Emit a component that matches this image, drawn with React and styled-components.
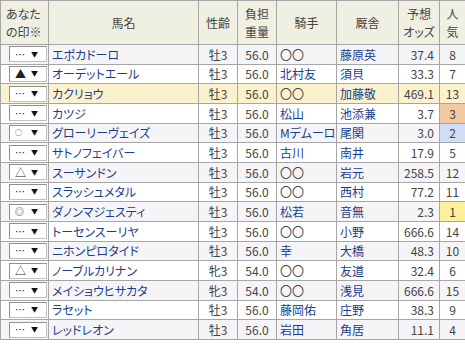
import React from "react";
import styled, { createGlobalStyle } from "styled-components";

const GlobalStyle = createGlobalStyle`
  body {
    margin: 0;
    background: #fff;
    font-family: "Noto Sans CJK JP", "Liberation Sans", sans-serif;
  }
`;

const line = "#a6a6a6";
const link = "#1b3d8f";

const Table = styled.table`
  width: 465px;
  table-layout: fixed;
  border-collapse: collapse;
  font-size: 12px;
  color: #444;
  font-feature-settings: "palt";
`;

const HeadRow = styled.tr`
  height: 44px;
  background: #efefe2;
`;

const HeadCell = styled.th`
  border: 1px solid ${line};
  font-weight: normal;
  font-size: 12px;
  line-height: 18px;
  color: #444;
  padding: 0 2px;
  text-align: ${(p) => p.$align || "center"};
  padding-left: ${(p) => (p.$align === "left" ? "5px" : "2px")};
`;

const Row = styled.tr`
  height: 19.66px;
  background: ${(p) => p.$bg};
`;

const Cell = styled.td`
  border: 1px solid ${line};
  padding: 0 ${(p) => p.$pad || 3}px;
  text-align: ${(p) => p.$align || "left"};
  color: ${(p) => p.$color || "#444"};
  background: ${(p) => p.$bg || "transparent"};
  white-space: nowrap;
  overflow: hidden;
  text-overflow: clip;
  line-height: 17px;
`;

const MarkBox = styled.div`
  width: 38px;
  height: 16px;
  margin-left: 5px;
  box-sizing: border-box;
  border: 1px solid #c0c0c0;
  border-top-color: #909090;
  border-left-color: #909090;
  background: #fff;
  display: flex;
  align-items: center;
  justify-content: space-between;
  padding: 0 8px 0 5px;
  font-size: 10px;
  color: #222;
`;

const Symbol = styled.span`
  font-size: ${(p) => p.$size};
`;

const Arrow = styled.span`
  font-size: 7px;
  color: #111;
`;

const horses = [
  ["…", "エポカドーロ", "牡3", "56.0", "〇〇", "藤原英", "37.4", 8],
  ["▲", "オーデットエール", "牡3", "56.0", "北村友", "須貝", "33.3", 7],
  ["…", "カクリョウ", "牡3", "56.0", "〇〇", "加藤敬", "469.1", 13],
  ["…", "カツジ", "牡3", "56.0", "松山", "池添兼", "3.7", 3],
  ["○", "グローリーヴェイズ", "牡3", "56.0", "Mデムーロ", "尾関", "3.0", 2],
  ["…", "サトノフェイバー", "牡3", "56.0", "古川", "南井", "17.9", 5],
  ["△", "スーサンドン", "牡3", "56.0", "〇〇", "岩元", "258.5", 12],
  ["…", "スラッシュメタル", "牡3", "56.0", "〇〇", "西村", "77.2", 11],
  ["◎", "ダノンマジェスティ", "牡3", "56.0", "松若", "音無", "2.3", 1],
  ["…", "トーセンスーリヤ", "牡3", "56.0", "〇〇", "小野", "666.6", 14],
  ["…", "ニホンピロタイド", "牡3", "56.0", "幸", "大橋", "48.3", 10],
  ["△", "ノーブルカリナン", "牝3", "54.0", "〇〇", "友道", "32.4", 6],
  ["…", "メイショウヒサカタ", "牝3", "54.0", "〇〇", "浅見", "666.6", 15],
  ["…", "ラセット", "牡3", "56.0", "藤岡佑", "庄野", "38.3", 9],
  ["…", "レッドレオン", "牡3", "56.0", "岩田", "角居", "11.1", 4],
];

const popColor = { 1: "#fff19c", 2: "#cfddf5", 3: "#f2c9a0" };

const markSize = (m) => {
  if (m === "…") return "10px";
  if (m === "○") return "7px";
  if (m === "◎") return "9px";
  return "11px";
};

const rowBg = (i) => {
  if (i === 2) return "#fcf1cd";
  return i % 2 === 0 ? "#f5f5f7" : "#ffffff";
};

export default function App() {
  return (
    <>
      <GlobalStyle />
      <Table>
        <colgroup>
          <col style={{ width: 48 }} />
          <col style={{ width: 150 }} />
          <col style={{ width: 39 }} />
          <col style={{ width: 39 }} />
          <col style={{ width: 60 }} />
          <col style={{ width: 62 }} />
          <col style={{ width: 41 }} />
          <col style={{ width: 26 }} />
        </colgroup>
        <thead>
          <HeadRow>
            <HeadCell $align="left">
              あなた
              <br />
              の印※
            </HeadCell>
            <HeadCell>馬名</HeadCell>
            <HeadCell>性齢</HeadCell>
            <HeadCell>
              負担
              <br />
              重量
            </HeadCell>
            <HeadCell>騎手</HeadCell>
            <HeadCell>厩舎</HeadCell>
            <HeadCell>
              予想
              <br />
              オッズ
            </HeadCell>
            <HeadCell>
              人
              <br />
              気
            </HeadCell>
          </HeadRow>
        </thead>
        <tbody>
          {horses.map(([mark, name, sex, weight, jockey, trainer, odds, pop], i) => (
            <Row key={name} $bg={rowBg(i)}>
              <Cell $pad={0}>
                <MarkBox>
                  <Symbol $size={markSize(mark)}>{mark}</Symbol>
                  <Arrow>▼</Arrow>
                </MarkBox>
              </Cell>
              <Cell $color={link}>{name}</Cell>
              <Cell $align="center">{sex}</Cell>
              <Cell $align="center">{weight}</Cell>
              <Cell $color={jockey === "〇〇" ? "#444" : link}>{jockey}</Cell>
              <Cell $color={link}>{trainer}</Cell>
              <Cell $align="right" $pad={5}>
                {odds}
              </Cell>
              <Cell $align="center" $bg={popColor[pop]}>
                {pop}
              </Cell>
            </Row>
          ))}
        </tbody>
      </Table>
    </>
  );
}
